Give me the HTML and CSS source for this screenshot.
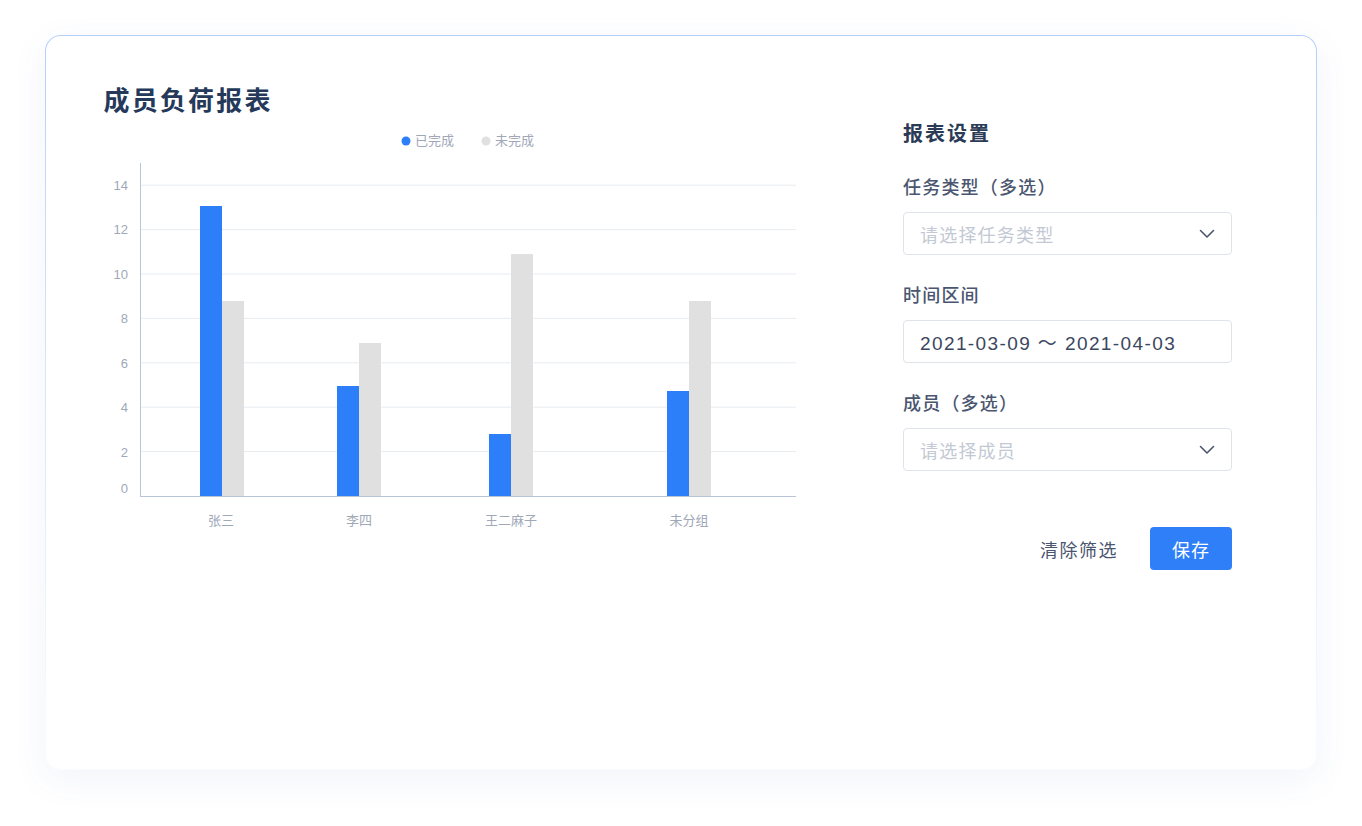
FILE: index.html
```html
<!DOCTYPE html>
<html lang="zh">
<head>
<meta charset="utf-8">
<title>成员负荷报表</title>
<link rel="stylesheet" href="styles.css">
</head>
<body>
<div class="page">
  <div class="card">
    <section class="report">
      <h1 class="title">成员负荷报表</h1>
      <svg class="chart" width="700" height="420" viewBox="0 0 700 420">
        <g class="legend">
          <circle cx="302" cy="23" r="4.5" fill="#2d7ff9"/>
          <text x="311" y="27">已完成</text>
          <circle cx="382" cy="23" r="4.5" fill="#e0e0e0"/>
          <text x="391" y="27">未完成</text>
        </g>
        <g class="grid">
          <line x1="36" x2="692" y1="67.2" y2="67.2"/>
          <line x1="36" x2="692" y1="111.6" y2="111.6"/>
          <line x1="36" x2="692" y1="156" y2="156"/>
          <line x1="36" x2="692" y1="200.4" y2="200.4"/>
          <line x1="36" x2="692" y1="244.8" y2="244.8"/>
          <line x1="36" x2="692" y1="289.2" y2="289.2"/>
          <line x1="36" x2="692" y1="333.6" y2="333.6"/>
        </g>
        <g class="ylabels">
          <text x="24" y="71.5">14</text>
          <text x="24" y="116">12</text>
          <text x="24" y="160.5">10</text>
          <text x="24" y="205">8</text>
          <text x="24" y="249.5">6</text>
          <text x="24" y="294">4</text>
          <text x="24" y="338.5">2</text>
          <text x="24" y="374.5">0</text>
        </g>
        <g class="bars">
          <rect class="done" x="96" y="88" width="22" height="290"/>
          <rect class="todo" x="118" y="183" width="22" height="195"/>
          <rect class="done" x="233" y="268" width="22" height="110"/>
          <rect class="todo" x="255" y="225" width="22" height="153"/>
          <rect class="done" x="385" y="316" width="22" height="62"/>
          <rect class="todo" x="407" y="136" width="22" height="242"/>
          <rect class="done" x="563" y="273" width="22" height="105"/>
          <rect class="todo" x="585" y="183" width="22" height="195"/>
        </g>
        <g class="axis">
          <line x1="36.5" x2="36.5" y1="45" y2="378"/>
          <line x1="36" x2="692" y1="378.5" y2="378.5"/>
        </g>
        <g class="xlabels">
          <text x="117" y="407">张三</text>
          <text x="255" y="407">李四</text>
          <text x="407" y="407">王二麻子</text>
          <text x="585" y="407">未分组</text>
        </g>
      </svg>
    </section>
    <aside class="settings">
      <h2 class="settings-title">报表设置</h2>
      <div class="field">
        <div class="label">任务类型（多选）</div>
        <div class="control">
          <span class="placeholder">请选择任务类型</span>
          <svg class="chevron" width="16" height="10" viewBox="0 0 16 10"><polyline points="1.5,1.5 8,8 14.5,1.5"/></svg>
        </div>
      </div>
      <div class="field">
        <div class="label">时间区间</div>
        <div class="control">
          <span class="value">2021-03-09 ～ 2021-04-03</span>
        </div>
      </div>
      <div class="field">
        <div class="label">成员（多选）</div>
        <div class="control">
          <span class="placeholder">请选择成员</span>
          <svg class="chevron" width="16" height="10" viewBox="0 0 16 10"><polyline points="1.5,1.5 8,8 14.5,1.5"/></svg>
        </div>
      </div>
      <div class="actions">
        <button class="btn-text">清除筛选</button>
        <button class="btn-primary">保存</button>
      </div>
    </aside>
  </div>
</div>
</body>
</html>
```
FILE: styles.css
```css
html, body {
  margin: 0;
  padding: 0;
  background: #ffffff;
}
body {
  font-family: "Noto Sans CJK SC", "Noto Sans", sans-serif;
  width: 1362px;
  height: 826px;
  overflow: hidden;
}
.page {
  padding: 35px 0 0 45px;
}
.card {
  box-sizing: border-box;
  width: 1272px;
  height: 735px;
  border-radius: 16px;
  border: 1.5px solid transparent;
  background:
    linear-gradient(#ffffff, #ffffff) padding-box,
    linear-gradient(180deg, #b5cefd 0%, #dfe9fd 55%, #fbfcff 100%) border-box;
  box-shadow: 0 10px 36px rgba(70, 100, 200, 0.07);
  display: flex;
  padding: 45px 84px 0 57.5px;
}
.report {
  flex: 1;
  display: flex;
  flex-direction: column;
}
.title {
  margin: 0;
  font-size: 26px;
  line-height: 36px;
  font-weight: 600;
  color: #25395a;
  letter-spacing: 2.2px;
}
.chart {
  display: block;
  margin-top: 1px;
}
.chart text {
  font-family: "Noto Sans CJK SC", sans-serif;
  font-size: 13px;
  fill: #a0a8b8;
}
.ylabels text {
  text-anchor: end;
  font-family: "Liberation Sans", "Noto Sans", sans-serif;
}
.xlabels text {
  text-anchor: middle;
}
.grid line {
  stroke: #e7ecf1;
  stroke-width: 1;
}
.axis line {
  stroke: #b8c5d8;
  stroke-width: 1;
}
.bars .done { fill: #2d7ff9; }
.bars .todo { fill: #e0e0e0; }

.settings {
  width: 329px;
  margin-top: 38px;
}
.settings-title {
  margin: 0;
  font-size: 20px;
  line-height: 28px;
  font-weight: 600;
  color: #2b3a55;
  letter-spacing: 2px;
}
.field {
  margin-top: 26px;
}
.field + .field {
  margin-top: 26px;
}
.label {
  font-size: 18px;
  line-height: 26px;
  font-weight: 500;
  color: #4a5670;
  letter-spacing: 1.2px;
}
.control {
  box-sizing: border-box;
  margin-top: 13px;
  height: 43px;
  border: 1px solid #dfe3ea;
  border-radius: 4px;
  display: flex;
  align-items: center;
  justify-content: space-between;
  padding: 0 16px 0 16px;
}
.placeholder {
  font-size: 18px;
  color: #c3c9d4;
  letter-spacing: 1.2px;
}
.value {
  font-size: 19px;
  color: #3b4660;
  font-family: "Liberation Sans", "Noto Sans CJK SC", sans-serif;
  letter-spacing: 1.4px;
}
.chevron polyline {
  fill: none;
  stroke: #4a5670;
  stroke-width: 1.6;
  stroke-linecap: round;
  stroke-linejoin: round;
}
.actions {
  margin-top: 56px;
  display: flex;
  justify-content: flex-end;
  align-items: center;
  gap: 32px;
}
.btn-text {
  border: none;
  background: none;
  padding: 0;
  font-family: inherit;
  font-size: 18px;
  color: #4a5670;
  letter-spacing: 1.5px;
  cursor: pointer;
}
.btn-primary {
  border: none;
  width: 82px;
  height: 43px;
  border-radius: 4px;
  background: #2e7ff8;
  color: #ffffff;
  font-family: inherit;
  font-size: 18px;
  letter-spacing: 1px;
  cursor: pointer;
}
```
